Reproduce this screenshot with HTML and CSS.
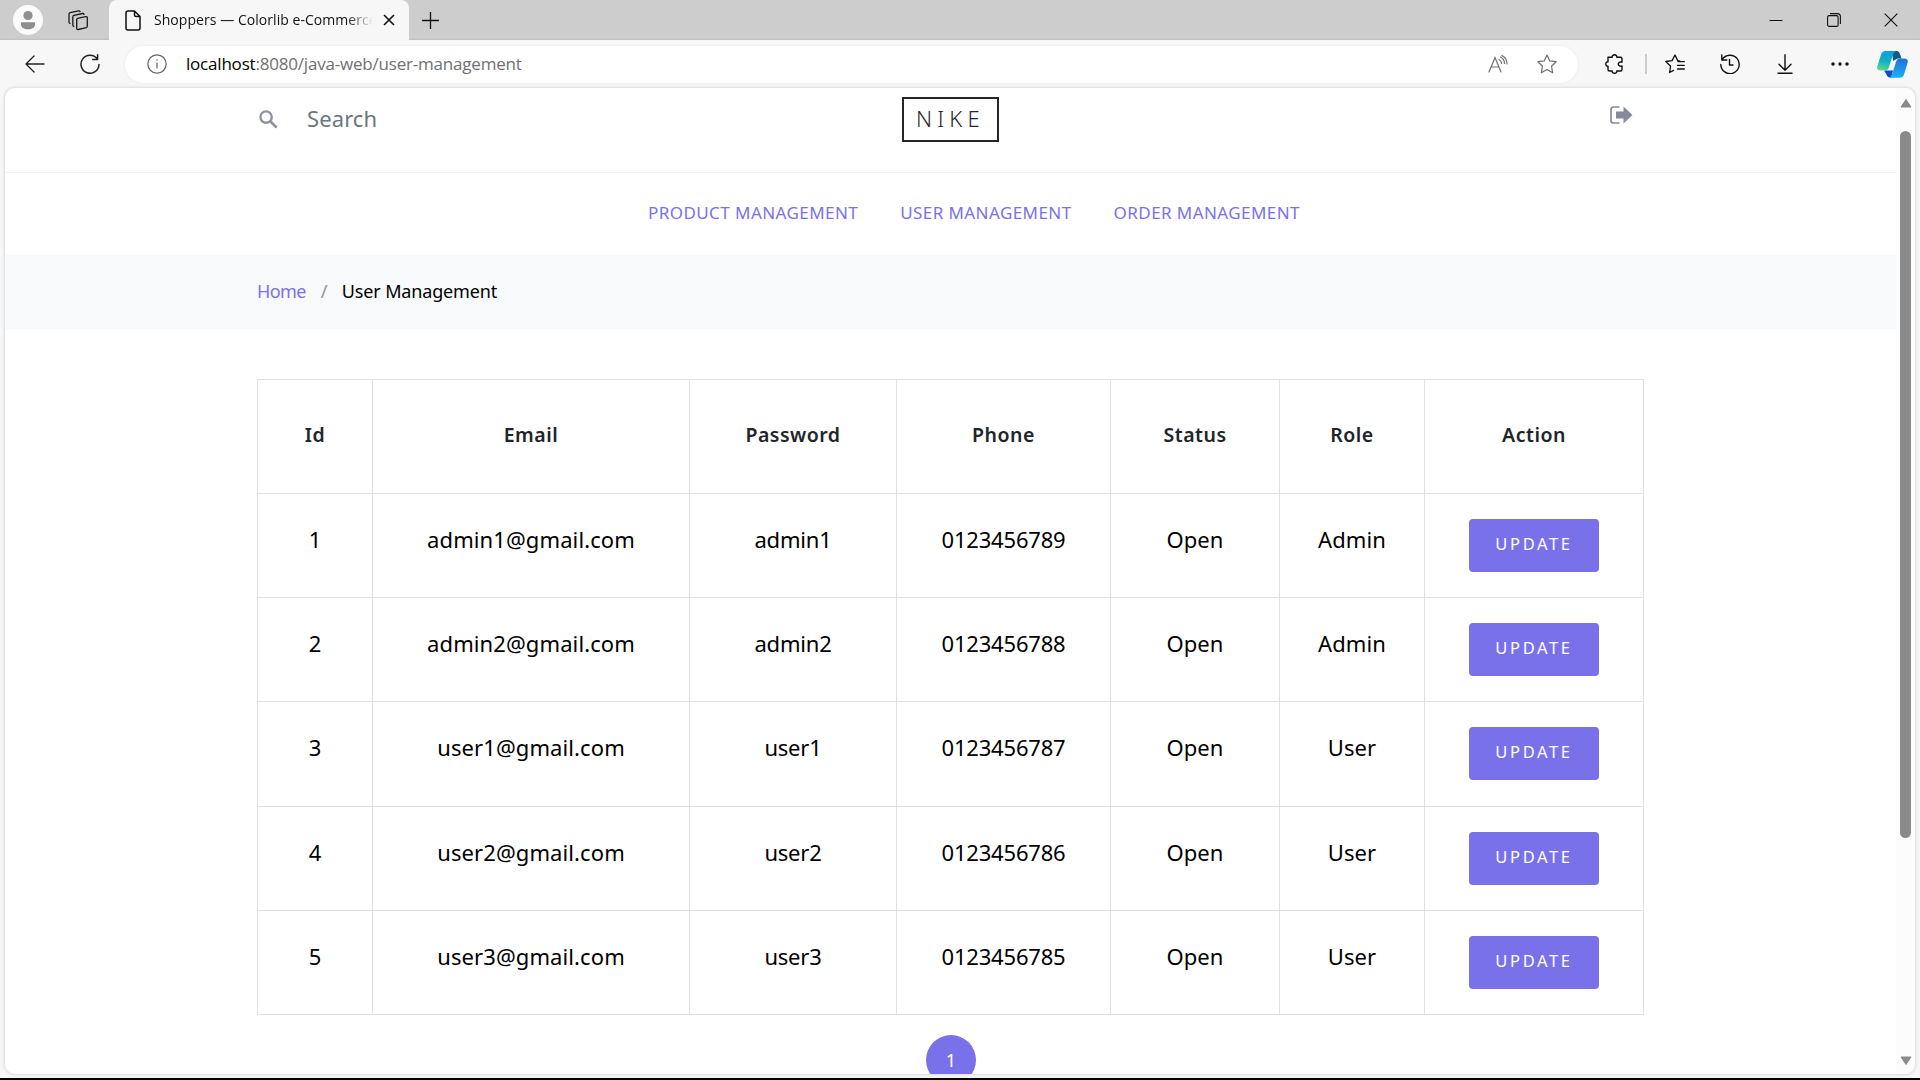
FILE: index.html
```html
<!DOCTYPE html>
<html lang="en">
<head>
<meta charset="utf-8">
<title>Shoppers — Colorlib e-Commerce</title>
<link rel="stylesheet" href="styles.css">
</head>
<body>
<div class="window">
  <header class="tabstrip">
    <span class="avatar"><svg width="30" height="30" viewBox="0 0 30 30"><circle cx="15" cy="15" r="15" fill="#fafafa"/><circle cx="15" cy="10.500" r="4.600" fill="#8f8f8f"/><path d="M8 17.300h14v2.200c0 3.200-3 4.700-7 4.700s-7-1.500-7-4.700z" fill="#8f8f8f"/></svg></span>
    <svg class="workspaces" width="20" height="21" viewBox="0 0 20 21" fill="none" stroke="#1b1b1b" stroke-width="1.300" stroke-linejoin="round" stroke-linecap="round"><path d="M9.500 8.300 17.800 6.600q1.500-.2 1.500 1.200v8.400q0 1.100-1.100 1.400l-7.900 1.900q-1.600.3-1.600-1.300V9.700q0-1.200.8-1.400z"/><path d="M5.800 16.400q-1-.3-1-1.500V7q0-1.300 1.200-1.600l8.500-1.900q1.300-.2 1.500.9"/><path d="M2 13.500q-1-.3-1-1.500V4.300Q1 3 2.200 2.700L10.500.9q1.300-.2 1.500.7"/></svg>
    <div class="tab">
      <svg width="16" height="21" viewBox="0 0 16 21" fill="none" stroke="#111" stroke-width="1.500" stroke-linejoin="round"><path d="M3 1h6.500L15 6.500V18q0 2-2 2H3q-2 0-2-2V3q0-2 2-2zM9.500 1v4q0 1.500 1.500 1.500h4"/></svg>
      <span class="tab-title">Shoppers — Colorlib e-Commerce</span>
      <svg width="12" height="12" viewBox="0 0 12 12" stroke="#111" stroke-width="1.600"><path d="M1 1l10 10M11 1 1 11"/></svg>
    </div>
    <svg class="newtab" width="17" height="17" viewBox="0 0 17 17" stroke="#111" stroke-width="1.300"><path d="M8.500 0v17M0 8.500h17"/></svg>
    <div class="winctl">
      <svg width="14" height="14" viewBox="0 0 14 14" stroke="#111" stroke-width="1"><path d="M.5 7.500h13"/></svg>
      <svg width="14" height="14" viewBox="0 0 14 14" fill="none" stroke="#111" stroke-width="1.100"><rect x=".6" y="2.600" width="10.500" height="10.800" rx="1.500"/><path d="M3 .6h7.400q3 0 3 3V11"/></svg>
      <svg width="14" height="14" viewBox="0 0 14 14" stroke="#111" stroke-width="1.100"><path d="M.7.700l12.600 12.600M13.300.700.700 13.300"/></svg>
    </div>
  </header>

  <div class="toolbar">
    <div class="nav-btns">
      <svg width="20" height="18" viewBox="0 0 20 18" fill="none" stroke="#222" stroke-width="1.300" stroke-linecap="round" stroke-linejoin="round"><path d="M19 9H1M9 1 1 9l8 8"/></svg>
      <svg width="20" height="20" viewBox="0 0 20 20" fill="none" stroke="#222" stroke-width="1.500" stroke-linecap="round" stroke-linejoin="round"><path d="M17.200 4.800A9 9 0 1 0 19 10.500M17.600.800v4.700h-4.800"/></svg>
    </div>
    <div class="address">
      <svg width="20" height="20" viewBox="0 0 20 20" fill="none" stroke="#666" stroke-width="1.200"><circle cx="10" cy="10" r="9.200"/><path d="M10 8.500v6M10 5.300v1.500"/></svg>
      <span class="url"><b>localhost</b>:8080/java-web/user-management</span>
      <svg class="read" width="20" height="18" viewBox="0 0 20 18" fill="none" stroke="#707070" stroke-width="1.200" stroke-linecap="round"><path d="M1 17 7 2.500 13 17M3.200 12h7.600M11 4.500q2.300 1.500 2.600 4M12.500 2q3.800 2 4 6.500M14 .6q5 2.400 5 8.400"/></svg>
      <svg width="20" height="20" viewBox="0 0 20 20" fill="none" stroke="#707070" stroke-width="1.200" stroke-linejoin="round"><path d="m10 1 2.800 5.900 6.300.8-4.600 4.500 1.200 6.600-5.700-3.200-5.700 3.200 1.200-6.600L.9 7.700l6.300-.8z"/></svg>
    </div>
    <div class="tools">
      <span class="tool ext"><svg width="19" height="20" viewBox="0 0 19 20" fill="none" stroke="#111" stroke-width="1.400" stroke-linejoin="round"><path d="M3 3.300h4.200C7 1.700 8 .8 9.500.8s2.500.9 2.300 2.500h3.700q1.500 0 1.500 1.500v3.400c-2-.6-3.700.2-3.700 1.900s1.700 2.500 3.700 1.900v3.500q0 1.500-1.500 1.500h-3.700c.2 1.500-.8 2.300-2.300 2.300S7 18.500 7.200 17H4.500Q3 17 3 15.500v-3.200C1.600 12.400.8 11.600.8 10S1.600 7.700 3 7.800z"/></svg></span>
      <i class="sep"></i>
      <span class="tool"><svg width="20" height="20" viewBox="0 0 20 20" fill="none" stroke="#111" stroke-width="1.300" stroke-linejoin="round" stroke-linecap="round"><path d="M8.500 16.400 4.600 18.500l1-6.300L.8 7.500l6.300-.9L10 1l2.700 5.600 2 .3M13 7.700H19.300M12.500 11.300H19.300M12.500 15H19.300"/></svg></span>
      <span class="tool"><svg width="20" height="20" viewBox="0 0 20 20" fill="none" stroke="#111" stroke-width="1.400" stroke-linecap="round" stroke-linejoin="round"><path d="M2.200 5.500A9.200 9.200 0 1 1 .8 10.500M1.800 1v5h5M9.500 5.500V11h3.500"/></svg></span>
      <span class="tool"><svg width="16" height="20" viewBox="0 0 16 20" fill="none" stroke="#111" stroke-width="1.400" stroke-linecap="round" stroke-linejoin="round"><path d="M8 .8v15M2 10.200l6 6 6-6M1 19.200h14"/></svg></span>
      <span class="tool"><svg width="18" height="4" viewBox="0 0 18 4" fill="#111"><circle cx="2" cy="2" r="1.700"/><circle cx="9" cy="2" r="1.700"/><circle cx="16" cy="2" r="1.700"/></svg></span>
      <span class="tool copilot"><svg width="31" height="27" viewBox="0 0 31 27">
        <defs>
          <linearGradient id="ga" x1=".4" y1="0" x2=".2" y2="1"><stop offset="0" stop-color="#0aa0dc"/><stop offset=".5" stop-color="#12b0c0"/><stop offset="1" stop-color="#5bdc8c"/></linearGradient>
          <linearGradient id="gb" x1=".6" y1="0" x2=".4" y2="1"><stop offset="0" stop-color="#2b6fd6"/><stop offset="1" stop-color="#12b4fb"/></linearGradient>
        </defs>
        <path d="M15 0h4.500Q22 0 23 3l1.500 4.500h-4L16 10z" fill="#0d5c86"/>
        <path d="M7 19.500h9L14.500 26.500H13q-2.500 0-3.500-3z" fill="#1549cf"/>
        <path d="M8.500 0H19q-2 .5-3 3.500L12 16q-1 3.500-4 3.500H3.500Q-.500 19.500.300 15.500L4 3.500Q5 0 8.500 0z" fill="url(#ga)"/>
        <path d="M22.500 7.500h4.500q4.500 0 3.700 4L27 23.500q-1 3.300-4.500 3.300H12q2-.5 3-3.500L19 11q1-3.500 3.500-3.500z" fill="url(#gb)"/>
      </svg></span>
    </div>
  </div>

  <div class="viewport">
    <main class="page">
      <div class="topbar">
        <div class="search"><svg width="19" height="19" viewBox="0 0 18 18" fill="none" stroke="#8c92a0" stroke-width="2.200"><circle cx="6.700" cy="6.700" r="5.400"/><path d="m10.700 10.700 6 6" stroke-width="2.600"/></svg><span>Search</span></div>
        <div class="logo">NIKE</div>
        <div class="account"><svg width="23" height="18" viewBox="0 0 23 18"><path d="M9.500 1H3.500Q1 1 1 3.500v11Q1 17 3.500 17h6" fill="none" stroke="#868a9b" stroke-width="1.700"/><path d="M6 5.500h7.500V.5l9 8.500-9 8.500v-5H6z" fill="#868a9b"/></svg></div>
      </div>
      <nav class="menu"><a>PRODUCT MANAGEMENT</a><a>USER MANAGEMENT</a><a>ORDER MANAGEMENT</a></nav>
      <div class="crumbs"><a>Home</a><span class="slash">/</span><span>User Management</span></div>
      <table class="users">
        <colgroup><col class="c-id"><col class="c-email"><col class="c-pass"><col class="c-phone"><col class="c-status"><col class="c-role"><col class="c-action"></colgroup>
        <thead><tr><th>Id</th><th>Email</th><th>Password</th><th>Phone</th><th>Status</th><th>Role</th><th>Action</th></tr></thead>
        <tbody>
          <tr><td>1</td><td>admin1@gmail.com</td><td class="tight">admin1</td><td class="tight">0123456789</td><td>Open</td><td>Admin</td><td class="act"><a class="btn">UPDATE</a></td></tr>
          <tr><td>2</td><td>admin2@gmail.com</td><td class="tight">admin2</td><td class="tight">0123456788</td><td>Open</td><td>Admin</td><td class="act"><a class="btn">UPDATE</a></td></tr>
          <tr class="tall"><td>3</td><td>user1@gmail.com</td><td class="tight">user1</td><td class="tight">0123456787</td><td>Open</td><td>User</td><td class="act"><a class="btn">UPDATE</a></td></tr>
          <tr><td>4</td><td>user2@gmail.com</td><td class="tight">user2</td><td class="tight">0123456786</td><td>Open</td><td>User</td><td class="act"><a class="btn">UPDATE</a></td></tr>
          <tr><td>5</td><td>user3@gmail.com</td><td class="tight">user3</td><td class="tight">0123456785</td><td>Open</td><td>User</td><td class="act"><a class="btn">UPDATE</a></td></tr>
        </tbody>
      </table>
      <div class="pager"><span class="page-no">1</span></div>
    </main>
    <aside class="scrollbar">
      <svg width="12" height="10" viewBox="0 0 12 10"><path d="M6 1.500 11 9H1z" fill="#8a8a8a" stroke="#8a8a8a" stroke-linejoin="round"/></svg>
      <span class="thumb"></span>
      <svg class="down" width="12" height="10" viewBox="0 0 12 10"><path d="M6 8.500 11 1H1z" fill="#8a8a8a" stroke="#8a8a8a" stroke-linejoin="round"/></svg>
    </aside>
  </div>
</div>
</body>
</html>
```
FILE: styles.css
```css
* { box-sizing: border-box; }
body { margin: 0; background: #000; font-family: "Noto Sans", "Open Sans", sans-serif; line-height: 1; }
svg { display: block; flex: none; }

.window { width: 1920px; height: 1078px; background: #f7f7f7; display: flex; flex-direction: column; overflow: hidden; }

.tabstrip { height: 40px; background: #cdcdcd; display: flex; align-items: center; box-shadow: inset 0 -2px 2px -1px #bdbdbd; }
.avatar { margin-left: 13px; }
.workspaces { margin: 0 21px 0 25px; }
.tab { width: 300px; height: 40px; background: #f7f7f7; border-radius: 8px 8px 0 0; display: flex; align-items: center; padding: 0 14px 0 16px; }
.tab-title { flex: 1; margin: 0 10px 0 13px; overflow: hidden; white-space: nowrap; font: 400 14px/20px "Open Sans", sans-serif; letter-spacing: .05px; color: #111; -webkit-mask-image: linear-gradient(90deg, #000 88%, transparent); mask-image: linear-gradient(90deg, #000 88%, transparent); }
.newtab { margin-left: 13px; }
.winctl { margin-left: auto; display: flex; gap: 43.500px; padding-right: 22px; }

.toolbar { height: 48px; display: flex; align-items: center; flex: none; }
.nav-btns { width: 125px; display: flex; align-items: center; gap: 35px; padding-left: 25px; }
.address { width: 1453px; height: 37px; border-radius: 19px; background: #fff; box-shadow: 0 0 3px #e6e6e6; display: flex; align-items: center; padding: 0 21px 0 22px; }
.url { margin-left: 19px; padding-bottom: 1px; font: 400 17px/22px "Open Sans", sans-serif; letter-spacing: -.2px; color: #707070; white-space: nowrap; }
.url b { font-weight: 400; color: #000; }
.read { margin: 0 29px 0 auto; }
.tools { display: flex; align-items: center; }
.tool { width: 55px; display: flex; justify-content: center; }
.ext { width: 67px; padding-left: 5px; }
.sep { width: 2px; height: 20px; background: #ccc; }
.copilot { width: 51px; }

.viewport { width: 1910px; height: 986px; margin-left: 5px; background: #fff; border-radius: 10px; overflow: hidden; display: flex; box-shadow: 0 0 3px 1px #dcdcdc; }
.page { width: 1891px; }
.topbar { height: 85px; border-bottom: 1px solid #f3f3f4; padding: 9px 263px 0 254px; display: grid; grid-template-columns: 643px 97px 1fr; align-items: start; }
.search { display: flex; align-items: center; gap: 29px; height: 45px; font-size: 22px; letter-spacing: .1px; color: #6c757d; }
.search span { padding-bottom: 4px; }
.logo { height: 45px; border: 2px solid #25262a; display: flex; align-items: center; padding: 0 0 3px 12px; font-size: 22px; font-weight: 300; letter-spacing: 5.200px; color: #25262a; }
.account { display: flex; justify-content: flex-end; padding-top: 9px; }
.menu { height: 82px; display: flex; align-items: center; gap: 42px; padding: 0 0 3px 643px; font-size: 17px; font-weight: 400; letter-spacing: .43px; color: #7971ea; white-space: nowrap; }
.crumbs { height: 74px; background: #f8f9fa; display: flex; align-items: center; padding: 0 0 2px 252px; font-size: 18px; letter-spacing: -.15px; color: #000; }
.crumbs a { color: #7971ea; letter-spacing: -.6px; }
.slash { margin: 0 14.500px 0 15px; color: #8c92a0; }

.users { margin: 50px 0 0 252px; width: 1387px; table-layout: fixed; border-collapse: collapse; text-align: center; }
.users th, .users td { border: 1px solid #dee2e6; }
.users th { height: 114px; padding: 0 0 4px; font-size: 19.500px; font-weight: 600; letter-spacing: .5px; color: #212529; }
.users td { height: 104px; padding: 0 0 14px; font-size: 22px; letter-spacing: .1px; color: #000; }
.users .tall td { height: 105px; }
.users .tight { letter-spacing: -.2px; }
.users .act { padding: 0; }
.users .tall .act { padding-bottom: 1px; }
.c-id { width: 115px; }
.c-email { width: 317px; }
.c-pass { width: 207px; }
.c-phone { width: 214px; }
.c-status { width: 169px; }
.c-role { width: 145px; }
.c-action { width: 219px; }
.btn { width: 130px; height: 53px; margin: 0 auto; border-radius: 4px; background: #7971ea; color: #fff; display: flex; align-items: center; justify-content: center; padding-bottom: 2px; font-size: 16.500px; letter-spacing: 2.650px; }

.pager { display: flex; padding: 20px 0 0 921px; }
.page-no { width: 50px; height: 50px; border-radius: 50%; background: #7971ea; color: #fff; display: flex; align-items: center; justify-content: center; font-size: 18px; }

.scrollbar { width: 19px; background: #fcfcfc; display: flex; flex-direction: column; align-items: center; padding-top: 10px; }
.thumb { width: 11px; height: 707px; margin-top: 23px; border-radius: 6px; background: #8a8a8a; }
.down { margin: auto 0 8px; }
```
